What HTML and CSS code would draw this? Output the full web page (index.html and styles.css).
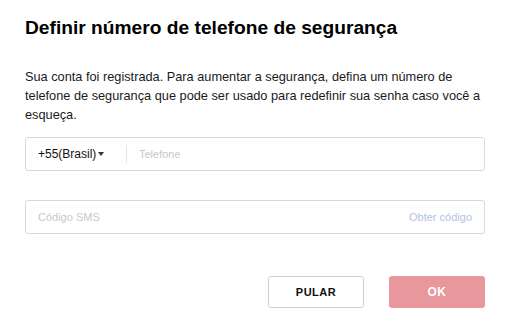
FILE: index.html
```html
<!DOCTYPE html>
<html lang="pt">
<head>
    <meta charset="UTF-8">
    <meta name="viewport" content="width=device-width, initial-scale=1.0">
    <title>Definir número de telefone de segurança</title>
    <link rel="stylesheet" href="styles.css">
</head>
<body>

    <!-- Dialog -->
    <div class="dialog">
        <h2 class="dialog-title">Definir número de telefone de segurança</h2>

        <p class="dialog-text">Sua conta foi registrada. Para aumentar a segurança, defina um número de telefone de segurança que pode ser usado para redefinir sua senha caso você a esqueça.</p>

        <!-- Phone input -->
        <div class="field">
            <div class="country">+55(Brasil)<span class="caret"></span></div>
            <span class="divider"></span>
            <input type="text" class="field-input" placeholder="Telefone">
        </div>

        <!-- SMS code -->
        <div class="field field-sms">
            <input type="text" class="field-input" placeholder="Código SMS">
            <a href="#" class="get-code">Obter código</a>
        </div>

        <!-- Buttons -->
        <div class="actions">
            <button class="btn btn-skip">PULAR</button>
            <button class="btn btn-ok">OK</button>
        </div>
    </div>

</body>
</html>
```

FILE: styles.css
```css
body {
    margin: 0;
    background-color: #fff;
    font-family: "Liberation Sans", Arial, sans-serif;
    color: #111;
}

.dialog {
    padding: 16px 24px 0 25px;
}

.dialog-title {
    margin: 0;
    font-size: 19.2px;
    font-weight: bold;
    line-height: 24px;
    color: #000;
}

.dialog-text {
    margin: 27px 0 0;
    font-size: 12.75px;
    line-height: 19px;
    color: #1a1a1a;
}

/* Input rows */
.field {
    display: flex;
    align-items: center;
    height: 32px;
    margin-top: 13px;
    border: 1px solid #d9d9d9;
    border-radius: 3px;
    padding: 0 12px;
}

.field-sms {
    margin-top: 29px;
}

.country {
    display: flex;
    align-items: center;
    font-size: 12px;
    color: #111;
    width: 88px;
}

.caret {
    width: 0;
    height: 0;
    margin-left: 2px;
    border-left: 3px solid transparent;
    border-right: 3px solid transparent;
    border-top: 4px solid #333;
}

.divider {
    width: 1px;
    height: 18px;
    background-color: #e3e3e3;
    margin-right: 12px;
}

.field-input {
    flex: 1;
    border: none;
    outline: none;
    padding: 0;
    font-family: inherit;
    font-size: 11px;
    color: #333;
    background: transparent;
}

.field-input::placeholder {
    color: #c8c8c8;
}

.get-code {
    font-size: 11px;
    color: #b5c1e6;
    text-decoration: none;
}

/* Buttons */
.actions {
    display: flex;
    justify-content: flex-end;
    gap: 25px;
    margin-top: 42px;
}

.btn {
    width: 96px;
    height: 32px;
    border-radius: 3px;
    font-family: inherit;
    font-size: 11px;
    font-weight: bold;
    letter-spacing: 0.5px;
    cursor: pointer;
}

.btn-skip {
    background-color: #fff;
    border: 1px solid #cfcfcf;
    color: #111;
}

.btn-ok {
    background-color: #e8989c;
    border: none;
    color: #fff;
    font-size: 12px;
}
```
